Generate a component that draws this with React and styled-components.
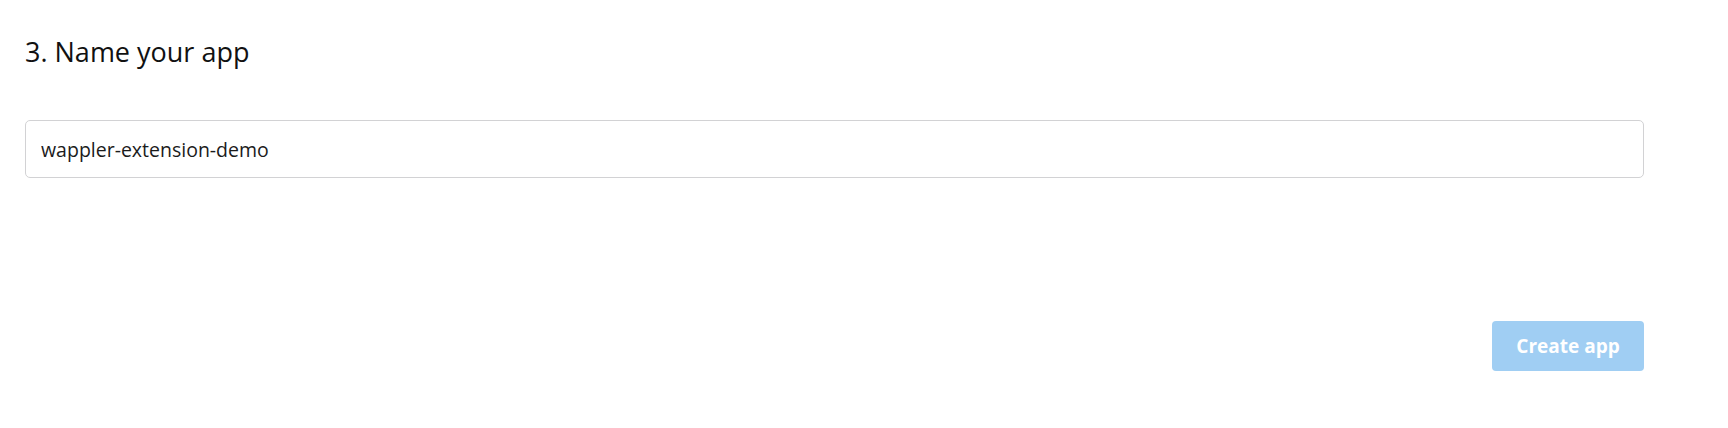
import React from "react";
import styled, { createGlobalStyle } from "styled-components";

const GlobalStyle = createGlobalStyle`
  html, body {
    margin: 0;
    padding: 0;
    background: #ffffff;
  }
  body {
    font-family: "Open Sans", "Noto Sans", sans-serif;
    color: #1b1b1b;
  }
`;

function App() {
  return (
    <>
      <GlobalStyle />
      <Page>
        <StepTitle>3. Name your app</StepTitle>
        <NameInput type="text" defaultValue="wappler-extension-demo" />
        <Footer>
          <PrimaryButton disabled>Create app</PrimaryButton>
        </Footer>
      </Page>
    </>
  );
}

const Page = styled.div`
  width: 1728px;
  height: 428px;
  box-sizing: border-box;
  padding: 36px 84px 0 25px;
  display: flex;
  flex-direction: column;
`;

const StepTitle = styled.h3`
  margin: 0;
  font-size: 27px;
  font-weight: 400;
  line-height: 32px;
  color: #111111;
`;

const NameInput = styled.input`
  margin-top: 52px;
  height: 58px;
  box-sizing: border-box;
  width: 100%;
  padding: 0 15px;
  border: 1px solid #d2d2d4;
  border-radius: 5px;
  font-family: "Open Sans", "Noto Sans", sans-serif;
  font-size: 19.5px;
  color: #1b1b1b;
  background: #ffffff;
  outline: none;
`;

const Footer = styled.div`
  margin-top: 143px;
  display: flex;
  justify-content: flex-end;
`;

const PrimaryButton = styled.button`
  width: 152px;
  height: 50px;
  border: none;
  border-radius: 4px;
  background: #a0cef3;
  color: #ffffff;
  font-family: "Open Sans", "Noto Sans", sans-serif;
  font-size: 19px;
  font-weight: 700;
  cursor: default;
`;

export default App;
